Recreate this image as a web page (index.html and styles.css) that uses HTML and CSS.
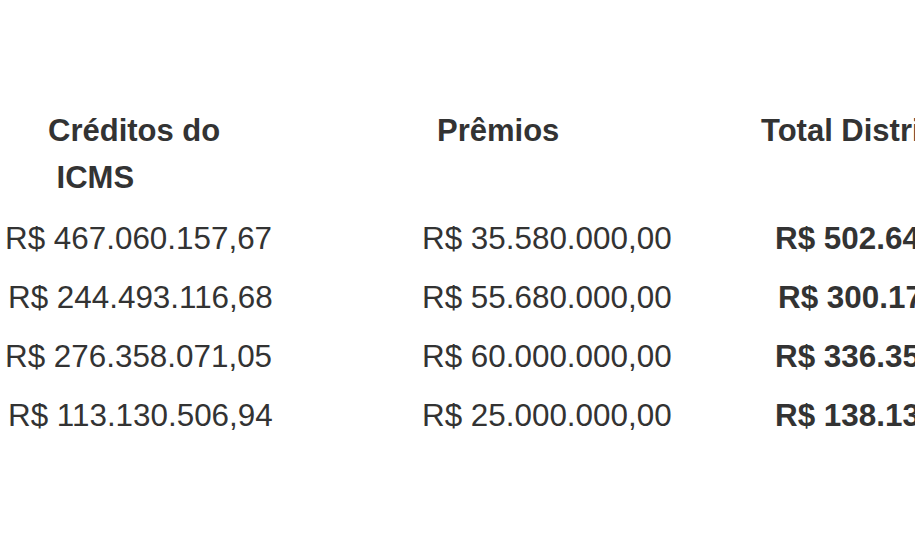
FILE: index.html
```html
<!DOCTYPE html>
<html lang="pt-BR">
<head>
<meta charset="utf-8">
<title>Distribuição</title>
<link rel="stylesheet" href="styles.css">
</head>
<body>
<div class="table">
  <div class="th c1">Créditos do<br>&nbsp;ICMS</div>
  <div class="th c2">Prêmios</div>
  <div class="th c3">Total Distribuído</div>

  <div class="td c1 first">R$ 467.060.157,67</div>
  <div class="td c2 first">R$ 35.580.000,00</div>
  <div class="td c3 first total">R$ 502.640.157,67</div>

  <div class="td c1 shift">R$ 244.493.116,68</div>
  <div class="td c2">R$ 55.680.000,00</div>
  <div class="td c3 total shift">R$ 300.173.116,68</div>

  <div class="td c1">R$ 276.358.071,05</div>
  <div class="td c2">R$ 60.000.000,00</div>
  <div class="td c3 total">R$ 336.358.071,05</div>

  <div class="td c1 shift">R$ 113.130.506,94</div>
  <div class="td c2">R$ 25.000.000,00</div>
  <div class="td c3 total">R$ 138.130.506,94</div>
</div>
</body>
</html>
```
FILE: styles.css
```css
html, body {
  margin: 0;
  padding: 0;
  background: #ffffff;
  overflow: hidden;
}
body {
  width: 915px;
  height: 555px;
  font-family: "Liberation Sans", Arial, sans-serif;
  font-size: 31px;
  color: #333333;
}
.table {
  display: grid;
  grid-template-columns: 400px 340px 500px;
  padding-top: 107px;
  white-space: nowrap;
}
.th {
  font-weight: bold;
  line-height: 47px;
  padding-bottom: 8px;
}
.td {
  font-size: 31.4px;
  line-height: 59px;
  height: 59px;
}
.th.c1 { padding-left: 48px; }
.th.c2 { padding-left: 37px; }
.th.c3 { padding-left: 21px; }
.td.c1 { padding-left: 5px; }
.td.c2 { padding-left: 22px; }
.td.c3 { padding-left: 35px; }
.td.c1.shift { padding-left: 8px; }
.td.c3.shift { padding-left: 38px; }
.total { font-weight: bold; }
```
